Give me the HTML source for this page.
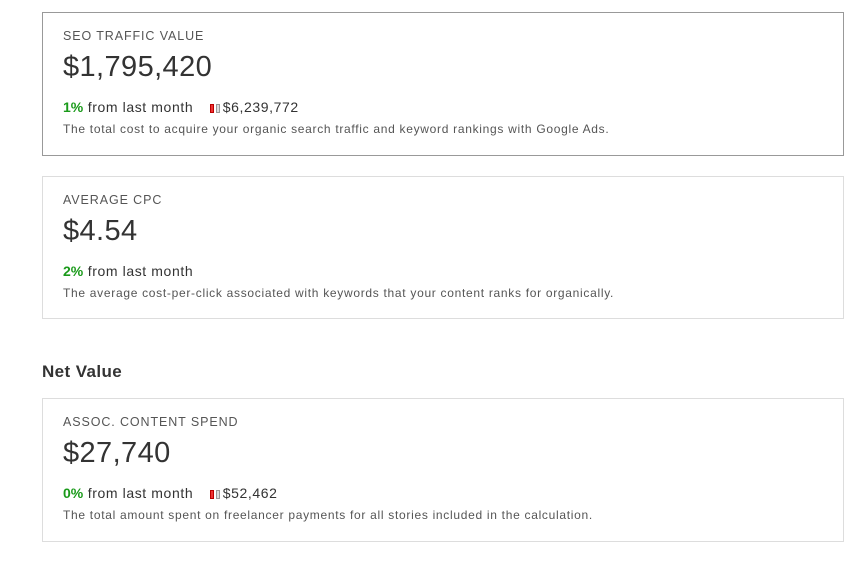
<!DOCTYPE html>
<html><head><style>
body{margin:0;width:860px;height:567px;background:#fff;font-family:"Liberation Sans",sans-serif;color:#333;position:relative;overflow:hidden}
.card{position:absolute;left:42px;width:802px;border:1px solid #ddd;box-sizing:border-box;background:#fff}
.card.sel{border-color:#999}
.lbl{position:absolute;left:20px;top:16px;font-size:12.5px;letter-spacing:0.9px;color:#555}
.big{position:absolute;left:20px;top:38px;font-size:29px;letter-spacing:0.4px;color:#333}
.row{position:absolute;left:20px;top:86px;font-size:14px;letter-spacing:0.6px;color:#333;white-space:nowrap}
.g{color:#1a9a1a;font-weight:bold;letter-spacing:0}
.desc{position:absolute;left:20px;top:109px;font-size:12px;letter-spacing:0.7px;color:#555}
.ic{display:inline-block;vertical-align:-1px;margin-left:12px;margin-right:1px}
.ic i{display:inline-block;width:3px;height:8px;margin-right:2px;box-sizing:border-box}
h2{position:absolute;left:42px;top:362px;margin:0;font-size:17px;letter-spacing:0.4px;font-weight:bold;color:#333}
</style></head><body>
<div class="card sel" style="top:12px;height:144px">
<div class="lbl">SEO TRAFFIC VALUE</div><div class="big">$1,795,420</div>
<div class="row"><span class="g">1%</span> from last month <span class="ic"><i style="background:#e33;border:1px solid #b00;width:4px;height:9px"></i><i style="background:#ddd;border:1px solid #999;width:4px;height:9px"></i></span>$6,239,772</div>
<div class="desc">The total cost to acquire your organic search traffic and keyword rankings with Google Ads.</div></div>
<div class="card" style="top:176px;height:143px">
<div class="lbl">AVERAGE CPC</div><div class="big">$4.54</div>
<div class="row"><span class="g">2%</span> from last month</div>
<div class="desc">The average cost-per-click associated with keywords that your content ranks for organically.</div></div>
<h2>Net Value</h2>
<div class="card" style="top:398px;height:144px">
<div class="lbl">ASSOC. CONTENT SPEND</div><div class="big">$27,740</div>
<div class="row"><span class="g">0%</span> from last month <span class="ic"><i style="background:#e33;border:1px solid #b00;width:4px;height:9px"></i><i style="background:#ddd;border:1px solid #999;width:4px;height:9px"></i></span>$52,462</div>
<div class="desc">The total amount spent on freelancer payments for all stories included in the calculation.</div></div>
</body></html>
